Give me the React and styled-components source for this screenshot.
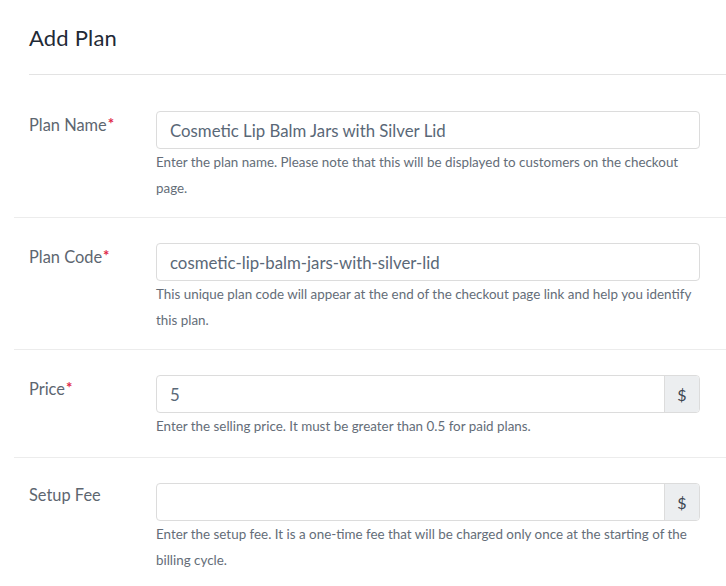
import React from "react";
import styled, { createGlobalStyle } from "styled-components";

const GlobalStyle = createGlobalStyle`
  body {
    margin: 0;
    background: #fff;
    font-family: Lato, "Open Sans", sans-serif;
  }
`;

const Page = styled.div`
  width: 726px;
  height: 586px;
  overflow: hidden;
  background: #fff;
`;

const Header = styled.div`
  margin-left: 29px;
  height: 74px;
  border-bottom: 1px solid #e3e3e3;
  display: flex;
  align-items: center;
`;

const Title = styled.h1`
  margin: 0;
  font-size: 22px;
  font-weight: 400;
  color: #1f2a36;
  letter-spacing: 0.2px;
`;

const Form = styled.div`
  margin-left: 14px;
  padding-top: 11px;
`;

const Row = styled.div`
  display: flex;
  padding: 25px 26px ${p => (p.$tall ? 18 : 16)}px 15px;
  border-bottom: 1px solid #ececec;
`;

const Label = styled.label`
  width: 127px;
  flex-shrink: 0;
  font-size: 16.4px;
  line-height: 24px;
  color: #5d6670;
`;

const Star = styled.span`
  color: #e0284a;
  font-weight: 700;
  vertical-align: 2px;
  font-size: 15px;
  margin-left: 1px;
`;

const Field = styled.div`
  flex: 1;
`;

const InputGroup = styled.div`
  display: flex;
  height: 38px;
  border: 1px solid #dcdcdc;
  border-radius: 4px;
  box-sizing: border-box;
  overflow: hidden;
`;

const Input = styled.div`
  flex: 1;
  padding: 0 13px;
  display: flex;
  align-items: center;
  font-size: 16.8px;
  color: #5a6877;
`;

const Addon = styled.div`
  width: 34px;
  display: flex;
  align-items: center;
  justify-content: center;
  background: #eceef0;
  border-left: 1px solid #dcdcdc;
  font-size: 16px;
  color: #3c4550;
`;

const Help = styled.p`
  margin: 0;
  font-size: 13.4px;
  line-height: 26px;
  color: #646d78;
`;

const fields = [
  {
    label: "Plan Name",
    required: true,
    value: "Cosmetic Lip Balm Jars with Silver Lid",
    help: "Enter the plan name. Please note that this will be displayed to customers on the checkout page.",
  },
  {
    label: "Plan Code",
    required: true,
    value: "cosmetic-lip-balm-jars-with-silver-lid",
    help: "This unique plan code will appear at the end of the checkout page link and help you identify this plan.",
  },
  {
    label: "Price",
    required: true,
    value: "5",
    addon: "$",
    help: "Enter the selling price. It must be greater than 0.5 for paid plans.",
  },
  {
    label: "Setup Fee",
    value: "",
    addon: "$",
    help: "Enter the setup fee. It is a one-time fee that will be charged only once at the starting of the billing cycle.",
  },
];

export default function App() {
  return (
    <Page>
      <GlobalStyle />
      <Header>
        <Title>Add Plan</Title>
      </Header>
      <Form>
        {fields.map(f => (
          <Row key={f.label} $tall={!!f.addon}>
            <Label>
              {f.label}
              {f.required && <Star>*</Star>}
            </Label>
            <Field>
              <InputGroup>
                <Input>{f.value}</Input>
                {f.addon && <Addon>{f.addon}</Addon>}
              </InputGroup>
              <Help>{f.help}</Help>
            </Field>
          </Row>
        ))}
      </Form>
    </Page>
  );
}
